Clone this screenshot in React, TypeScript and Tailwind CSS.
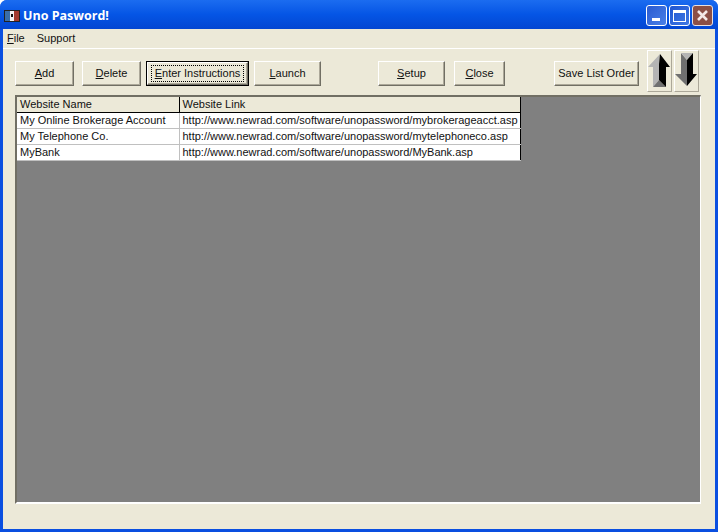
const font = { fontFamily: '"Liberation Sans", Arial, sans-serif' };

function U({ children }: { children: string }) {
  return <span className="underline underline-offset-1">{children}</span>;
}

function Btn({ w, ml, focus, children }: { w: string; ml: string; focus?: boolean; children: React.ReactNode }) {
  return (
    <div className={`${w} ${ml} h-[25px] shrink-0 ${focus ? "border border-black" : ""}`}>
      <div className="h-full w-full whitespace-nowrap bg-[#ece9d8] border border-t-white border-l-white border-r-[#716f64] border-b-[#716f64] shadow-[inset_-1px_-1px_0_#aca899] flex items-center justify-center text-[11px] text-[#111]">
        {focus ? (
          <div className="border border-dotted border-black h-[17px] w-[calc(100%-6px)] flex items-center justify-center">{children}</div>
        ) : (
          children
        )}
      </div>
    </div>
  );
}

function Arrow({ up, ml }: { up?: boolean; ml: string }) {
  return (
    <div className={`w-[25px] h-[42px] ${ml} shrink-0 bg-[#ece9d8] border border-t-white border-l-white border-r-[#aca899] border-b-[#aca899] flex items-center justify-center`}>
      <svg width="23" height="38" viewBox="0 0 23 38">
        {up ? (
          <>
            <path d="M12 2 L0 15 H5 V35 L11 28 V12 Z" fill="#b4b4b4" />
            <path d="M5 35 L11 28 L18 35 Z" fill="#707070" />
            <path d="M12 2 L22 15 H18 V35 L11 28 V12 Z" fill="#000" />
          </>
        ) : (
          <>
            <path d="M6 1 L12 8 V34 L0 22 H6 Z" fill="#707070" />
            <path d="M6 1 L12 8 L18 1 Z" fill="#b4b4b4" />
            <path d="M18 1 L12 8 V34 L22 22 H18 Z" fill="#000" />
          </>
        )}
      </svg>
    </div>
  );
}

const rows = [
  ["My Online Brokerage Account", "http://www.newrad.com/software/unopassword/mybrokerageacct.asp"],
  ["My Telephone Co.", "http://www.newrad.com/software/unopassword/mytelephoneco.asp"],
  ["MyBank", "http://www.newrad.com/software/unopassword/MyBank.asp"],
];

export default function App() {
  return (
    <div style={font} className="w-[718px] h-[532px] overflow-hidden flex flex-col bg-[#0a4fe0] rounded-t-[7px]">
      <div className="h-[29px] shrink-0 flex items-center pl-[4px] pr-[5px] pt-[2px] bg-gradient-to-b from-[#1b6cf0] via-[#0555e5] to-[#0346d2]">
        <svg width="16" height="12" viewBox="0 0 16 12" className="shrink-0">
          <rect width="16" height="12" fill="#222" />
          <rect x="1" y="1" width="5" height="10" fill="#3a6ea8" />
          <rect x="6" y="1" width="4" height="10" fill="#f2f2f2" />
          <rect x="10" y="1" width="5" height="10" fill="#a33a2e" />
          <rect x="7" y="4" width="2" height="3" fill="#111" />
        </svg>
        <span className="ml-[3px] text-white font-bold text-[12.5px] mt-[1px]" style={{ fontFamily: '"Open Sans", sans-serif' }}>Uno Pasword!</span>
        <div className="ml-auto flex gap-[2px]">
          <div className="w-[21px] h-[21px] rounded-[3px] border border-white bg-gradient-to-br from-[#2a5ad0] to-[#4a80e8] flex items-end pl-[5px] pb-[4px]">
            <div className="w-[8px] h-[3px] bg-white" />
          </div>
          <div className="w-[21px] h-[21px] rounded-[3px] border border-white bg-gradient-to-br from-[#1f55d0] to-[#4078e4] flex items-center justify-center">
            <div className="w-[13px] h-[12px] border border-t-[3px] border-white" />
          </div>
          <div className="w-[21px] h-[21px] rounded-[3px] border border-[#e8e0e0] bg-[#8c4f45] flex items-center justify-center">
            <svg width="13" height="13" viewBox="0 0 13 13">
              <path d="M2 2 L11 11 M11 2 L2 11" stroke="#f4e8e6" strokeWidth="2.6" />
            </svg>
          </div>
        </div>
      </div>

      <div className="flex-1 mx-[3px] mb-[3px] bg-[#ece9d8] flex flex-col text-black">
        <div className="h-[20px] shrink-0 flex items-center pl-[4px] gap-[12px] text-[11px] text-[#111] border-b border-white">
          <span><U>F</U>ile</span>
          <span>Support</span>
        </div>

        <div className="h-[46px] shrink-0 flex items-start pl-[12px]">
          <div className="flex items-start mt-[12px]">
            <Btn w="w-[59px]" ml="ml-0"><span><U>A</U>dd</span></Btn>
            <Btn w="w-[59px]" ml="ml-[8px]"><span><U>D</U>elete</span></Btn>
            <Btn w="w-[103px]" ml="ml-[5px]" focus><span><U>E</U>nter Instructions</span></Btn>
            <Btn w="w-[67px]" ml="ml-[5px]"><span><U>L</U>aunch</span></Btn>
            <Btn w="w-[67px]" ml="ml-[57px]"><span><U>S</U>etup</span></Btn>
            <Btn w="w-[51px]" ml="ml-[9px]"><span><U>C</U>lose</span></Btn>
            <Btn w="w-[85px]" ml="ml-[49px]"><span>Save List Order</span></Btn>
          </div>
          <div className="flex mt-[1px]">
            <Arrow up ml="ml-[8px]" />
            <Arrow ml="ml-[2px]" />
          </div>
        </div>

        <div className="ml-[12px] mr-[14px] h-[409px] shrink-0 bg-[#808080] border-t-2 border-l-2 border-t-[#716f64] border-l-[#716f64] border-r border-b-2 border-r-white border-b-white">
          <table className="border-collapse table-fixed w-[504px] text-[11px] text-[#111] leading-[14px] border-r border-b border-black">
            <colgroup>
              <col className="w-[162px]" />
              <col />
            </colgroup>
            <thead>
              <tr className="h-[15px] bg-[#ece9d8]">
                <th className="font-normal text-left pl-[3px] border-r border-b border-black">Website Name</th>
                <th className="font-normal text-left pl-[3px] border-b border-black">Website Link</th>
              </tr>
            </thead>
            <tbody>
              {rows.map(([a, b]) => (
                <tr key={a} className="h-[16px] bg-white">
                  <td className="pl-[3px] border-r border-b border-r-[#c0c0c0] border-b-[#c0c0c0] whitespace-nowrap overflow-hidden">{a}</td>
                  <td className="pl-[3px] border-b border-b-[#c0c0c0] whitespace-nowrap">{b}</td>
                </tr>
              ))}
            </tbody>
          </table>
        </div>
      </div>
    </div>
  );
}
